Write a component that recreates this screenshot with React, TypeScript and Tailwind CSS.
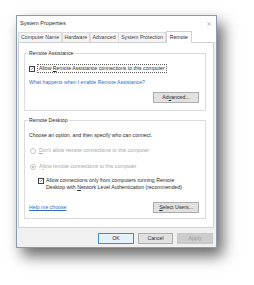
import { X } from 'lucide-react';

function Checkbox() {
  return (
    <span className="flex items-center justify-center w-[6px] h-[6px] border-[0.5px] border-[#444] bg-white shrink-0">
      <svg viewBox="0 0 10 10" className="w-[5px] h-[5px]">
        <polyline points="1.5,5.2 4,7.6 8.6,2.2" fill="none" stroke="#333" strokeWidth="1.3" />
      </svg>
    </span>
  );
}

function Radio({ checked }: { checked?: boolean }) {
  return (
    <span className="flex items-center justify-center w-[6px] h-[6px] rounded-full border-[0.5px] border-[#c8c8c8] bg-white shrink-0">
      {checked && <span className="w-[2px] h-[2px] rounded-full bg-[#b0b0b0]" />}
    </span>
  );
}

function Button({ children, primary, disabled }: { children: React.ReactNode; primary?: boolean; disabled?: boolean }) {
  return (
    <div
      className={`flex items-center justify-center h-[11px] border-[0.5px] ${
        primary ? 'border-[#3c8ce0] bg-[#e5f1fb]' : disabled ? 'border-[#c8c8c8] bg-[#cccccc]' : 'border-[#adadad] bg-[#e1e1e1]'
      } ${disabled ? 'text-[#9a9a9a]' : 'text-[#2a2a2a]'}`}
    >
      {children}
    </div>
  );
}

export default function App() {
  const tabs = ['Computer Name', 'Hardware', 'Advanced', 'System Protection'];

  return (
    <div className="w-[254px] h-[285px] bg-white pt-[15px] pl-[16px] font-['Liberation_Sans',Arial,sans-serif] text-[5.2px] leading-[7px] text-[#2a2a2a]">
      <div className="w-[201px] h-[233px] flex flex-col border border-[#8a9bb0] bg-[#f0f0f0] shadow-[6px_8px_14px_rgba(0,0,0,0.6)]">
        {/* Title bar */}
        <div className="h-[15px] bg-white flex items-center justify-between pl-[3px] pr-[4px]">
          <span className="text-[5.6px]">System Properties</span>
          <X className="w-[6px] h-[6px] text-[#555]" strokeWidth={1.5} />
        </div>

        {/* Tabs */}
        <div className="flex items-end h-[11px] px-[1px] bg-white">
          {tabs.map((t) => (
            <div key={t} className="h-[10px] flex items-center px-[2px] border-[0.5px] border-b-0 border-[#dcdcdc] bg-[#f4f4f4] -mr-[0.5px] text-[#444]">
              {t}
            </div>
          ))}
          <div className="h-[12px] -mb-[1px] relative z-10 flex items-center px-[3px] border-[0.5px] border-b-0 border-[#d0d0d0] bg-white">
            Remote
          </div>
        </div>

        {/* Tab panel */}
        <div className="h-[186px] mx-[1px] mr-[2px] bg-white border-[0.5px] border-[#d0d0d0] pt-[7px] pl-[5px] pr-[7px]">
          <fieldset className="border-[0.5px] border-[#dcdcdc] pl-[4px] pr-[6px] pb-[7px]">
            <legend className="px-[1px] -ml-[1px]">Remote Assistance</legend>
            <div className="mt-[7px] h-[9px] flex items-center gap-[2px]">
              <Checkbox />
              <span className="border-[0.5px] border-dotted border-[#666] px-[1px] leading-[7px]">
                Allow <span className="underline">R</span>emote Assistance connections to this computer
              </span>
            </div>
            <div className="mt-[6px] text-[#2f6fc4]">What happens when I enable Remote Assistance?</div>
            <div className="mt-[6px] flex justify-end">
              <div className="w-[46px]">
                <Button>
                  Ad<span className="underline">v</span>anced...
                </Button>
              </div>
            </div>
          </fieldset>

          <fieldset className="mt-[6px] border-[0.5px] border-[#dcdcdc] pl-[4px] pr-[6px] pb-[5px]">
            <legend className="px-[1px] -ml-[1px]">Remote Desktop</legend>
            <div className="mt-[8px]">Choose an option, and then specify who can connect.</div>
            <div className="mt-[8px] flex items-center gap-[3px] pl-[1px] text-[#a6a6a6]">
              <Radio />
              <span>
                <span className="underline">D</span>on't allow remote connections to this computer
              </span>
            </div>
            <div className="mt-[9px] flex items-center gap-[3px] pl-[1px] text-[#a6a6a6]">
              <Radio checked />
              <span>
                A<span className="underline">l</span>low remote connections to this computer
              </span>
            </div>
            <div className="mt-[7px] flex items-start gap-[2px] pl-[9px]">
              <div className="mt-[0.5px]">
                <Checkbox />
              </div>
              <span>
                Allow connections only from computers running Remote
                <br />
                Desktop with <span className="underline">N</span>etwork Level Authentication (recommended)
              </span>
            </div>
            <div className="mt-[11px] flex items-center justify-between">
              <span className="text-[#2f6fc4] underline">Help me choose</span>
              <div className="w-[46px]">
                <Button>
                  <span className="underline">S</span>elect Users...
                </Button>
              </div>
            </div>
          </fieldset>
        </div>

        {/* Footer */}
        <div className="flex-1 flex items-center justify-end gap-[4px] pr-[3px] pt-[1px]">
          <div className="w-[36px]">
            <Button primary>OK</Button>
          </div>
          <div className="w-[35px]">
            <Button>Cancel</Button>
          </div>
          <div className="w-[36px]">
            <Button disabled>Apply</Button>
          </div>
        </div>
      </div>
    </div>
  );
}
